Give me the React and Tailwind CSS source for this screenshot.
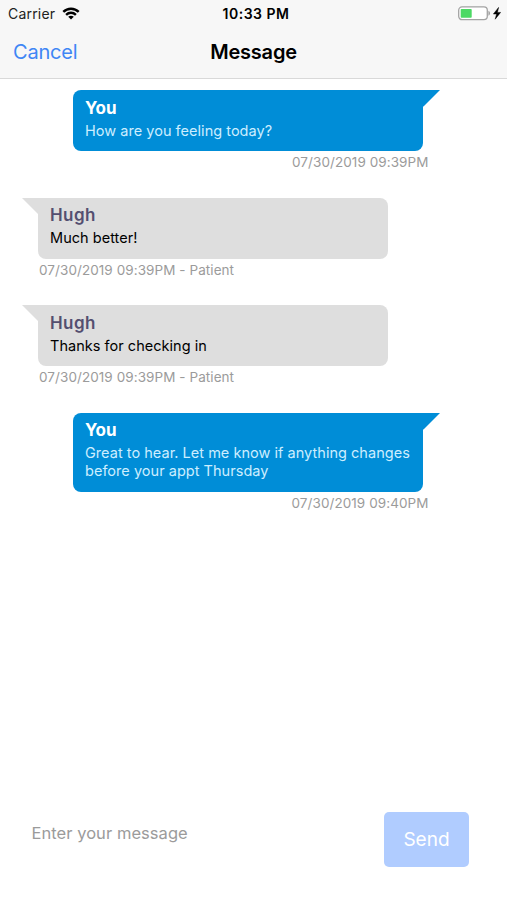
import React from 'react';
import clsx from 'clsx';

const messages = [
  { id: 1, mine: true, name: 'You', lines: ['How are you feeling today?'], stamp: '07/30/2019 09:39PM' },
  { id: 2, mine: false, name: 'Hugh', lines: ['Much better!'], stamp: '07/30/2019 09:39PM - Patient' },
  { id: 3, mine: false, name: 'Hugh', lines: ['Thanks for checking in'], stamp: '07/30/2019 09:39PM - Patient' },
  {
    id: 4,
    mine: true,
    name: 'You',
    lines: ['Great to hear. Let me know if anything changes', 'before your appt Thursday'],
    stamp: '07/30/2019 09:40PM',
  },
];

const WifiIcon = () => (
  <svg width="18" height="13" viewBox="0 0 18 13" fill="none" stroke="#000" strokeWidth="2.4">
    <path d="M1.3 4.9C5.6 0.6 12.4 0.6 16.7 4.9" />
    <path d="M4.1 7.8C6.9 5.1 11.1 5.1 13.9 7.8" />
    <path d="M9 12.4L6.2 9.7C7.8 8.3 10.2 8.3 11.8 9.7Z" fill="#000" stroke="none" />
  </svg>
);

const BatteryIcon = () => (
  <svg width="44" height="15" viewBox="0 0 44 15">
    <rect x="0.7" y="0.9" width="28.6" height="12.8" rx="3.4" fill="#fff" stroke="#a3a3a3" strokeWidth="1.3" />
    <rect x="2.7" y="2.9" width="11" height="8.8" rx="0.8" fill="#4cd964" />
    <path d="M30.4 4.8C32.6 5.5 32.6 9.1 30.4 9.8Z" fill="#a3a3a3" />
    <path d="M40.6 1.4L35.4 8H38.6L37.2 13.2L42.6 6.4H39.4Z" fill="#000" stroke="#000" strokeWidth="0.5" />
  </svg>
);

const StatusBar = () => (
  <div className="grid h-[27px] grid-cols-3 items-center">
    <div className="flex items-center gap-[7px] pl-2 text-[14px] text-[#222]">
      <span className="w-[47px] whitespace-nowrap tracking-[0.2px]">Carrier</span>
      <WifiIcon />
    </div>
    <div className="pl-[5px] text-center text-[14px] font-semibold tracking-[0.5px] text-black">10:33 PM</div>
    <div className="flex justify-end pr-[5px]">
      <BatteryIcon />
    </div>
  </div>
);

const NavBar = () => (
  <div className="grid h-[49px] grid-cols-3 items-center">
    <button className="pl-[13px] text-left text-[20px] tracking-[-0.2px] text-[#3f86f5]">Cancel</button>
    <h1 className="text-center text-[20px] font-semibold tracking-[-0.2px] text-black">Message</h1>
  </div>
);

const Message = ({ message }) => {
  const { mine, name, lines, stamp } = message;

  return (
    <li className={clsx('flex w-[350px] flex-col', mine ? 'ml-[73px]' : 'ml-[38px]')}>
      <div
        className={clsx(
          'relative h-fit pb-[11.5px] pl-3 pt-[7.5px]',
          mine ? 'rounded-lg rounded-tr-none bg-[#008dd7]' : 'rounded-lg rounded-tl-none bg-[#dedede]'
        )}
      >
        <svg
          className={clsx('absolute top-0', mine ? '-right-[16.5px]' : '-left-[16.5px] -scale-x-100')}
          width="17"
          height="17"
          viewBox="0 0 17 17"
        >
          <path d="M0 0H17L0.5 16.5H0Z" fill={mine ? '#008dd7' : '#dedede'} />
        </svg>
        <div
          className={clsx(
            'text-[17px] leading-[20px]',
            mine ? 'font-bold text-white' : 'font-semibold tracking-[0.4px] text-[#544f70]'
          )}
        >
          {name}
        </div>
        <div className={clsx('mt-[4px] text-[14.5px] leading-[18px] tracking-[0.03px]', mine ? 'text-[#cdeeff]' : 'text-black')}>
          {lines.map((line) => (
            <div key={line} className="whitespace-nowrap">{line}</div>
          ))}
        </div>
      </div>
      <div
        className={clsx(
          'mt-[3px] whitespace-nowrap text-[13.5px] leading-[16px] tracking-[0.07px] text-[#9b9b9b]',
          mine ? '-mr-[5.5px] text-right' : 'pl-px'
        )}
      >
        {stamp}
      </div>
    </li>
  );
};

const App = () => (
  <div className="flex h-[900px] w-[507px] flex-col overflow-hidden bg-white font-['Inter','Liberation_Sans',sans-serif]">
    <header className="h-[79px] border-b border-[#d9d9d9] bg-[#f7f7f7]">
      <StatusBar />
      <NavBar />
    </header>
    <ul className="flex flex-1 flex-col gap-[27.5px] pt-[11px]">
      {messages.map((message) => (
        <Message key={message.id} message={message} />
      ))}
    </ul>
    <footer className="flex h-[88.5px] items-start justify-between pl-[31.5px] pr-[38px]">
      <div className="pt-[9px] text-[16.5px] leading-[24px] tracking-[0.05px] text-[#9b9b9b]">Enter your message</div>
      <button className="h-[55px] w-[85px] rounded-[5px] bg-[#b0ccff] pt-[2px] text-[19px] text-white">Send</button>
    </footer>
  </div>
);

export default App;
